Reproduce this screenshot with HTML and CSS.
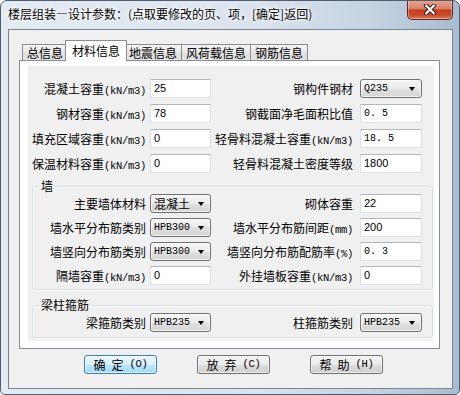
FILE: index.html
```html
<!DOCTYPE html>
<html lang="zh-CN">
<head>
    <meta charset="UTF-8">
    <title>楼层组装—设计参数</title>
    <link rel="stylesheet" href="styles.css">
</head>
<body>
    <div class="window">
        <div class="titlebar">
            <span class="title">楼层组装—设计参数：(点取要修改的页、项，[确定]返回)</span>
            <div class="close">
                <svg width="14" height="11" viewBox="0 0 14 11">
                    <path d="M3 1.5 L11 9.5 M11 1.5 L3 9.5" stroke="#3a1d18" stroke-width="4.2" stroke-linecap="round"/>
                    <path d="M3 1.5 L11 9.5 M11 1.5 L3 9.5" stroke="#fff" stroke-width="2.2" stroke-linecap="round"/>
                </svg>
            </div>
        </div>

        <div class="client">
            <div class="tabs">
                <div class="tab">总信息</div>
                <div class="tab active">材料信息</div>
                <div class="tab">地震信息</div>
                <div class="tab">风荷载信息</div>
                <div class="tab">钢筋信息</div>
            </div>

            <div class="panel">
                <div class="page">
                    <div class="grid">
                        <div class="lbl">混凝土容重<small>(kN/m3)</small></div>
                        <div class="field">25</div>
                        <div class="lbl r">钢构件钢材</div>
                        <div class="combo">Q235</div>

                        <div class="lbl">钢材容重<small>(kN/m3)</small></div>
                        <div class="field">78</div>
                        <div class="lbl r">钢截面净毛面积比值</div>
                        <div class="field mono">0. 5</div>

                        <div class="lbl">填充区域容重<small>(kN/m3)</small></div>
                        <div class="field">0</div>
                        <div class="lbl r">轻骨料混凝土容重<small>(kN/m3)</small></div>
                        <div class="field mono">18. 5</div>

                        <div class="lbl">保温材料容重<small>(kN/m3)</small></div>
                        <div class="field">0</div>
                        <div class="lbl r">轻骨料混凝土密度等级</div>
                        <div class="field">1800</div>
                    </div>

                    <fieldset class="group">
                        <legend>墙</legend>
                        <div class="grid">
                            <div class="lbl">主要墙体材料</div>
                            <div class="combo cjk">混凝土</div>
                            <div class="lbl r">砌体容重</div>
                            <div class="field">22</div>

                            <div class="lbl">墙水平分布筋类别</div>
                            <div class="combo">HPB300</div>
                            <div class="lbl r">墙水平分布筋间距<small>(mm)</small></div>
                            <div class="field">200</div>

                            <div class="lbl">墙竖向分布筋类别</div>
                            <div class="combo">HPB300</div>
                            <div class="lbl r">墙竖向分布筋配筋率<small>(%)</small></div>
                            <div class="field mono">0. 3</div>

                            <div class="lbl">隔墙容重<small>(kN/m3)</small></div>
                            <div class="field">0</div>
                            <div class="lbl r">外挂墙板容重<small>(kN/m3)</small></div>
                            <div class="field">0</div>
                        </div>
                    </fieldset>

                    <fieldset class="group">
                        <legend>梁柱箍筋</legend>
                        <div class="grid">
                            <div class="lbl">梁箍筋类别</div>
                            <div class="combo">HPB235</div>
                            <div class="lbl r">柱箍筋类别</div>
                            <div class="combo">HPB235</div>
                        </div>
                    </fieldset>
                </div>
            </div>

            <div class="buttons">
                <div class="btn default">确<span class="sp"></span>定<span class="sp"></span><small>(O)</small></div>
                <div class="btn">放<span class="sp"></span>弃<span class="sp"></span><small>(C)</small></div>
                <div class="btn">帮<span class="sp"></span>助<span class="sp"></span><small>(H)</small></div>
            </div>
        </div>
    </div>
</body>
</html>
```

FILE: styles.css
```css
body {
    margin: 0;
    font-family: "Noto Sans CJK SC", sans-serif;
    font-size: 12px;
    color: #000;
}

.window {
    width: 460px;
    height: 395px;
    box-sizing: border-box;
    border: 1px solid #4f5e6e;
    border-radius: 7px 7px 5px 5px;
    background: linear-gradient(to right, #e4ebf3 0%, #dbe4ee 55%, #c6d4e3 80%, #a9bccf 100%);
    overflow: hidden;
}

/* title bar */
.titlebar {
    display: flex;
    height: 28px;
}

.title {
    padding: 5px 0 0 7px;
    line-height: 16px;
    white-space: nowrap;
    text-shadow: 0 0 6px #fff, 0 0 3px #fff, 0 0 2px #fff;
}

.close {
    margin: -1px 6px 0 auto;
    width: 46px;
    height: 20px;
    box-sizing: border-box;
    border: 1px solid #5c2a20;
    border-top: none;
    border-radius: 0 0 5px 5px;
    background: linear-gradient(#e9a593, #d98068 45%, #c4411f 52%, #cc4a2b 80%, #dd7a5c);
    box-shadow: inset 0 0 0 1px rgba(255, 255, 255, 0.35);
    display: flex;
    align-items: center;
    justify-content: center;
}

/* client area */
.client {
    margin: 0 6px 0 7px;
    height: 360px;
    box-sizing: border-box;
    border: 1px solid #7b8591;
    background: #f0f0f0;
}

.tabs {
    display: flex;
    align-items: flex-end;
    height: 19px;
    margin: 11px 0 0 13px;
}

.tab {
    height: 16px;
    box-sizing: border-box;
    padding: 0 4px;
    line-height: 15px;
    border: 1px solid #898c95;
    border-bottom: none;
    background: linear-gradient(#f4f4f4, #e8e8e8 50%, #dedede 50%, #e4e4e4);
    margin-left: -1px;
    white-space: nowrap;
}

.tab:first-child {
    margin-left: 0;
}

.tab.active {
    height: 21px;
    line-height: 19px;
    padding: 0 6px;
    margin: 0 -2px -1px -3px;
    background: #fff;
    position: relative;
    z-index: 1;
}

.panel {
    margin: 0 12px 0 10px;
    border: 1px solid #898c95;
    background: #fff;
    padding: 5px 5px 7px 8px;
}

.page {
    background: #f0f0f0;
    padding: 13px 0 3px 0;
}

.grid {
    display: grid;
    grid-template-columns: 122px 61px 149px 62px;
    grid-auto-rows: 19px;
    row-gap: 6px;
}

.group {
    margin: 5px 1px 0 4px;
    padding: 0 0 4px 0;
    min-width: 0;
    border: 1px solid #d5dfe5;
    border-radius: 3px;
    box-shadow: inset 1px 1px 0 #fff, 1px 1px 0 #fff;
}

.group + .group {
    margin-top: 7px;
    padding-bottom: 5px;
}

.group legend {
    margin-left: 6px;
    padding: 0 2px;
    line-height: 16px;
}

.group .grid {
    grid-template-columns: 117px 61px 149px 62px;
    row-gap: 5px;
}

.lbl {
    text-align: right;
    padding-right: 4px;
    line-height: 19px;
    white-space: nowrap;
}

.lbl.r {
    padding-right: 7px;
}

small {
    font-family: "Liberation Mono", monospace;
    font-size: 10.5px;
    letter-spacing: -0.3px;
}

.field {
    box-sizing: border-box;
    background: #fff;
    border: 1px solid #dde1e7;
    border-top-color: #b3b6bd;
    padding-left: 3px;
    font-family: "Liberation Sans", sans-serif;
    font-size: 11px;
    line-height: 17px;
}

.field.mono {
    font-family: "Liberation Mono", monospace;
    font-size: 10px;
}

.combo {
    display: flex;
    align-items: center;
    justify-content: space-between;
    box-sizing: border-box;
    padding: 0 6px 0 3px;
    border: 1px solid #707070;
    border-radius: 3px;
    background: linear-gradient(#f4f4f4, #ececec 50%, #e0e0e0 50%, #d6d6d6);
    box-shadow: inset 0 0 0 1px rgba(255, 255, 255, 0.7);
    font-family: "Liberation Mono", monospace;
    font-size: 10px;
}

.combo.cjk {
    font-family: "Noto Sans CJK SC", sans-serif;
    font-size: 12px;
}

.combo::after {
    content: "";
    border-left: 3.5px solid transparent;
    border-right: 3.5px solid transparent;
    border-top: 4px solid #000;
}

/* buttons */
.buttons {
    display: flex;
    gap: 40px;
    margin: 6px 0 0 75px;
}

.btn {
    width: 73px;
    height: 19px;
    box-sizing: border-box;
    border: 1px solid #707070;
    border-radius: 3px;
    background: linear-gradient(#f2f2f2, #ebebeb 50%, #dddddd 50%, #cfcfcf);
    box-shadow: inset 0 0 0 1px rgba(255, 255, 255, 0.6);
    display: flex;
    align-items: center;
    justify-content: center;
    line-height: 17px;
}

.btn.default {
    border-color: #3c7fb1;
    background: linear-gradient(#eaf6fd, #d9f0fc 50%, #bee6fd 50%, #a7d9f5);
}

.btn .sp {
    display: inline-block;
    width: 6px;
}
```
